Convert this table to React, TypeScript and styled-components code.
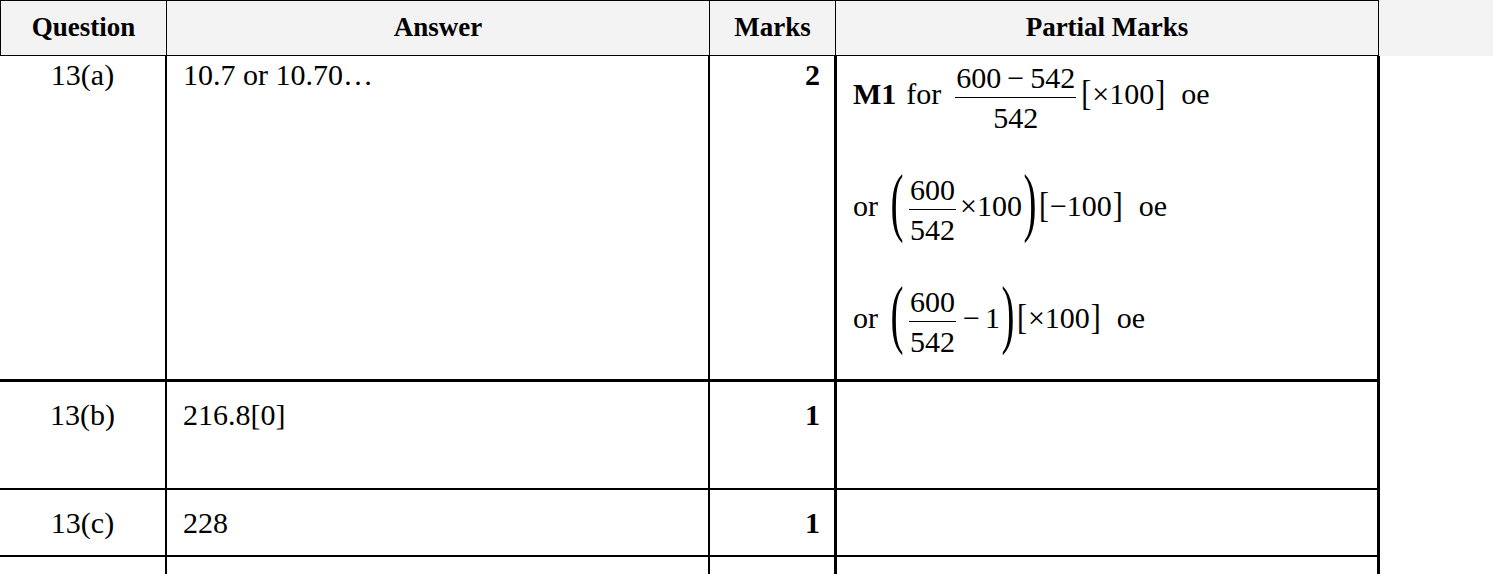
import styled, { createGlobalStyle } from "styled-components";

const GlobalStyle = createGlobalStyle`
  html, body {
    margin: 0;
    padding: 0;
    background: #fff;
  }
  body {
    font-family: "Liberation Serif", "Times New Roman", serif;
    color: #000;
  }
`;

const Page = styled.div`
  width: 1493px;
  height: 574px;
  overflow: hidden;
  background: #fff;
`;

const HeaderBand = styled.div`
  background: #f3f3f3;
`;

const HeaderRow = styled.div`
  display: grid;
  grid-template-columns: 166px 543px 126px 542px;
  width: 1379px;
  height: 56px;
  box-sizing: border-box;
  border: 1px solid #000;
`;

const HeaderCell = styled.div<{ $last?: boolean }>`
  display: flex;
  align-items: center;
  justify-content: center;
  padding-bottom: 2px;
  font-size: 27px;
  font-weight: bold;
  border-right: ${(p) => (p.$last ? "none" : "1px solid #000")};
`;

const BodyRow = styled.div<{ $height: number; $line: number }>`
  display: grid;
  grid-template-columns: 167px 543px 127px 543px;
  width: 1380px;
  height: ${(p) => p.$height}px;
  box-sizing: border-box;
  border-bottom: ${(p) => p.$line}px solid #000;
  font-size: 30px;
`;

const Cell = styled.div<{ $top: number; $rule: number }>`
  padding-top: ${(p) => p.$top}px;
  border-right: ${(p) => p.$rule}px solid #000;
  white-space: nowrap;
`;

const QuestionCell = styled(Cell)`
  text-align: center;
`;

const AnswerCell = styled(Cell)`
  padding-left: 16px;
`;

const MarksCell = styled(Cell)`
  text-align: right;
  padding-right: 14px;
  font-weight: bold;
`;

const PartialCell = styled(Cell)`
  padding-left: 16px;
`;

const MathLine = styled.div`
  height: 112px;
  line-height: 1;
  white-space: nowrap;
`;

const Frac = styled.span<{ $gap?: number }>`
  display: inline-flex;
  flex-direction: column;
  align-items: stretch;
  text-align: center;
  vertical-align: 16px;
  line-height: 1;
  margin: 0 4px 0 ${(p) => p.$gap ?? 4}px;
`;

const Num = styled.span`
  padding: 0 1px 4px;
  border-bottom: 1.5px solid #000;
`;

const Den = styled.span`
  padding-top: 5px;
`;

const Bracket = styled.span`
  display: inline-block;
  transform: scaleY(1.2);
  transform-origin: 50% 60%;
  margin: 0 1px;
`;

const Paren = styled.span`
  display: inline-block;
  transform: scale(1.3, 2.55);
  transform-origin: 50% 60%;
  margin: 0 3px;
`;

const Word = styled.span<{ $gap?: number }>`
  margin-left: ${(p) => p.$gap ?? 0}px;
`;

export default function App() {
  return (
    <Page>
      <GlobalStyle />
      <HeaderBand>
        <HeaderRow>
          <HeaderCell>Question</HeaderCell>
          <HeaderCell>Answer</HeaderCell>
          <HeaderCell>Marks</HeaderCell>
          <HeaderCell $last>Partial Marks</HeaderCell>
        </HeaderRow>
      </HeaderBand>

      <BodyRow $height={326} $line={3}>
        <QuestionCell $top={2} $rule={2}>13(a)</QuestionCell>
        <AnswerCell $top={2} $rule={2}>10.7 or 10.70…</AnswerCell>
        <MarksCell $top={2} $rule={3}>2</MarksCell>
        <PartialCell $top={7} $rule={3}>
          <MathLine>
            <b>M1</b>
            <Word $gap={10}>for</Word>
            <Frac $gap={14}>
              <Num>600&thinsp;−&thinsp;542</Num>
              <Den>542</Den>
            </Frac>
            <Bracket>[</Bracket>×100<Bracket>]</Bracket>
            <Word $gap={15}>oe</Word>
          </MathLine>
          <MathLine>
            or
            <Word $gap={11}>
              <Paren>(</Paren>
            </Word>
            <Frac>
              <Num>600</Num>
              <Den>542</Den>
            </Frac>
            ×100
            <Paren>)</Paren>
            <Bracket>[</Bracket>−100<Bracket>]</Bracket>
            <Word $gap={15}>oe</Word>
          </MathLine>
          <MathLine>
            or
            <Word $gap={11}>
              <Paren>(</Paren>
            </Word>
            <Frac>
              <Num>600</Num>
              <Den>542</Den>
            </Frac>
            <Word $gap={3}>−</Word>
            <Word $gap={5}>1</Word>
            <Paren>)</Paren>
            <Bracket>[</Bracket>×100<Bracket>]</Bracket>
            <Word $gap={15}>oe</Word>
          </MathLine>
        </PartialCell>
      </BodyRow>

      <BodyRow $height={108} $line={2}>
        <QuestionCell $top={16} $rule={2}>13(b)</QuestionCell>
        <AnswerCell $top={16} $rule={2}>216.8[0]</AnswerCell>
        <MarksCell $top={16} $rule={3}>1</MarksCell>
        <PartialCell $top={16} $rule={3} />
      </BodyRow>

      <BodyRow $height={67} $line={2}>
        <QuestionCell $top={16} $rule={2}>13(c)</QuestionCell>
        <AnswerCell $top={16} $rule={2}>228</AnswerCell>
        <MarksCell $top={16} $rule={3}>1</MarksCell>
        <PartialCell $top={16} $rule={3} />
      </BodyRow>

      <BodyRow $height={60} $line={0}>
        <QuestionCell $top={0} $rule={2} />
        <AnswerCell $top={0} $rule={2} />
        <MarksCell $top={0} $rule={3} />
        <PartialCell $top={0} $rule={3} />
      </BodyRow>
    </Page>
  );
}
